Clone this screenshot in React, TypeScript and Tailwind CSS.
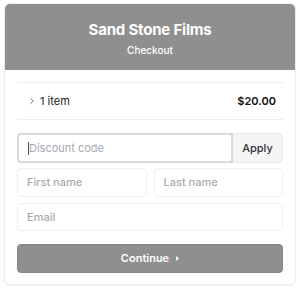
import { ChevronRight } from "lucide-react"

export default function App() {
  return (
    <div className="w-[300px] h-[290px] bg-white p-[3px] pl-[4px]" style={{ fontFamily: "Inter, 'Liberation Sans', sans-serif" }}>
      <div className="w-[292px] h-[282px] rounded-md border border-[#ececec] bg-white shadow-[0_1px_2px_rgba(0,0,0,0.06)] overflow-hidden">
        <div className="h-[66px] bg-[#8f8f8f] flex flex-col items-center pt-[16px]">
          <h1 className="text-[15px] font-bold leading-[20px] text-white tracking-[-0.2px]">Sand Stone Films</h1>
          <p className="mt-[4px] text-[10px] leading-[13px] font-medium text-white">Checkout</p>
        </div>

        <div className="px-[12px]">
          <div className="mt-[12px] h-px bg-[#ececec]" />
          <div className="h-[36px] flex items-center justify-between pl-[10px] pr-[7px]">
            <div className="flex items-center gap-[3px] text-[11px] text-[#222]">
              <ChevronRight className="w-[10px] h-[10px] text-[#555]" strokeWidth={2} />
              <span>1 item</span>
            </div>
            <span className="text-[11px] font-semibold text-[#111]">$20.00</span>
          </div>
          <div className="h-px bg-[#ececec]" />

          <div className="mt-[13px] flex">
            <div className="flex-1 h-[30px] rounded-l-[4px] border-2 border-[#d6dae0] flex items-center pl-[9px]">
              <span className="w-px h-[13px] bg-[#555]" />
              <span className="text-[11px] text-[#a6a9b0]">Discount code</span>
            </div>
            <button className="w-[50px] h-[30px] rounded-r-[4px] border border-[#e6e8eb] border-l-0 bg-[#f4f5f7] text-[11px] font-medium text-[#333]">Apply</button>
          </div>

          <div className="mt-[5px] grid grid-cols-2 gap-[7px]">
            <div className="h-[29px] rounded-[4px] border border-[#eceef1] flex items-center pl-[9px] text-[11px] font-medium text-[#a6a9b0]">First name</div>
            <div className="h-[29px] rounded-[4px] border border-[#eceef1] flex items-center pl-[9px] text-[11px] font-medium text-[#a6a9b0]">Last name</div>
          </div>

          <div className="mt-[6px] h-[28px] rounded-[4px] border border-[#eceef1] flex items-center pl-[9px] text-[11px] font-medium text-[#a6a9b0]">Email</div>

          <button className="mt-[13px] w-full h-[29px] rounded-[4px] bg-[#8f8f8f] border border-[#858585] flex items-center justify-center gap-[7px] text-[11px] font-semibold text-white">
            <span>Continue</span>
            <svg width="3" height="5" viewBox="0 0 3 5"><path d="M0 0 L3 2.5 L0 5 Z" fill="white" /></svg>
          </button>
        </div>
      </div>
    </div>
  )
}
